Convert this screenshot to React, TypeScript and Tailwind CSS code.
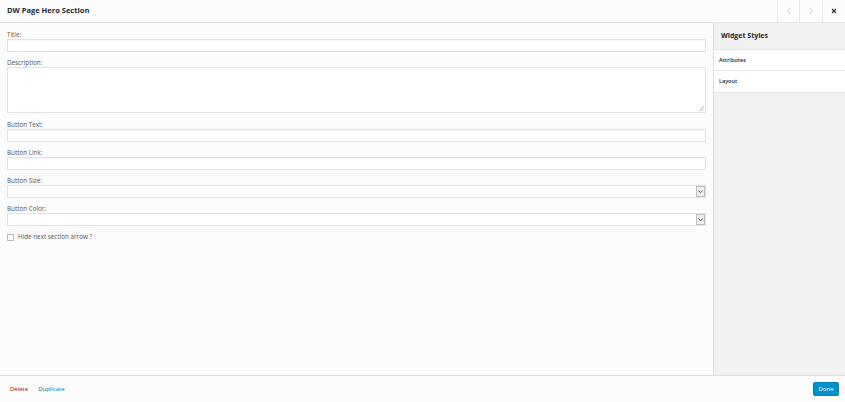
import React from "react";

const font = { fontFamily: '"Open Sans", "Noto Sans", sans-serif' };

function Label({ children }: { children: React.ReactNode }) {
  return <div className="h-[8px] text-[6.3px] leading-[8px] text-[#555]">{children}</div>;
}

function TextField({ label }: { label: string }) {
  return (
    <div className="mb-[7px]">
      <Label>{label}</Label>
      <div className="h-[13px] border border-[#e2e2e2] bg-white shadow-[inset_0_1px_1px_rgba(0,0,0,0.04)]" />
    </div>
  );
}

function SelectField({ label }: { label: string }) {
  return (
    <div className="mb-[7px]">
      <Label>{label}</Label>
      <div className="flex h-[13px] border border-[#e2e2e2] bg-white">
        <div className="flex-1" />
        <div className="flex w-[9px] items-center justify-center border border-[#bdbdbd] bg-[#eeeeee]">
          <svg width="5" height="4" viewBox="0 0 5 4">
            <path d="M0.5 0.5 L2.5 2.8 L4.5 0.5" fill="none" stroke="#666" strokeWidth="1" />
          </svg>
        </div>
      </div>
    </div>
  );
}

export default function App() {
  return (
    <div className="flex h-[402px] w-[845px] flex-col bg-[#fcfcfc]" style={font}>
      {/* Header */}
      <div className="flex h-[23px] shrink-0 items-center border-b border-[#e3e3e3] bg-[#fcfcfc]">
        <div className="flex-1 pl-[7px] text-[7.5px] font-bold text-[#23282d]">DW Page Hero Section</div>
        <div className="flex h-full">
          <div className="flex w-[22px] items-center justify-center border-l border-[#e8e8e8]">
            <svg width="6" height="8" viewBox="0 0 6 8">
              <path d="M4 1 L1.5 4 L4 7" fill="none" stroke="#cfcfcf" strokeWidth="1" />
            </svg>
          </div>
          <div className="flex w-[23px] items-center justify-center border-l border-[#e8e8e8]">
            <svg width="6" height="8" viewBox="0 0 6 8">
              <path d="M2 1 L4.5 4 L2 7" fill="none" stroke="#cfcfcf" strokeWidth="1" />
            </svg>
          </div>
          <div className="flex w-[23px] items-center justify-center border-l border-[#e8e8e8]">
            <svg width="6" height="6" viewBox="0 0 6 6">
              <path d="M1 1 L5 5 M5 1 L1 5" fill="none" stroke="#333" strokeWidth="1.2" />
            </svg>
          </div>
        </div>
      </div>

      {/* Body */}
      <div className="flex min-h-0 flex-1">
        <div className="flex-1 px-[7px] pt-[8px]">
          <TextField label="Title:" />
          <div className="mb-[8px]">
            <Label>Description:</Label>
            <div className="relative h-[46px] border border-[#e2e2e2] bg-white">
              <svg className="absolute bottom-[1px] right-[1px]" width="5" height="5" viewBox="0 0 5 5">
                <path d="M5 0 L0 5 M5 2.5 L2.5 5" stroke="#b0b0b0" strokeWidth="0.8" />
              </svg>
            </div>
          </div>
          <TextField label="Button Text:" />
          <TextField label="Button Link:" />
          <SelectField label="Button Size:" />
          <SelectField label="Button Color:" />
          <div className="flex h-[8px] items-center gap-[4px]">
            <div className="h-[7px] w-[7px] border border-[#b4b9be] bg-white" />
            <span className="text-[6.3px] text-[#555]">Hide next section arrow ?</span>
          </div>
        </div>

        {/* Sidebar */}
        <div className="w-[132px] shrink-0 border-l border-[#dddddd] bg-[#f1f1f1]">
          <div className="flex h-[26px] items-center pl-[7px] text-[7px] font-bold text-[#23282d]">Widget Styles</div>
          <div className="flex h-[22px] items-center border-y border-[#e5e5e5] bg-white pl-[5px] text-[5.5px] font-semibold text-[#23282d]">
            Attributes
          </div>
          <div className="flex h-[22px] items-center border-b border-[#e5e5e5] bg-white pl-[5px] text-[5.5px] font-semibold text-[#23282d]">
            Layout
          </div>
        </div>
      </div>

      {/* Footer */}
      <div className="flex h-[27px] shrink-0 items-center border-t border-[#dddddd] bg-[#fcfcfc] pl-[10px] pr-[6px]">
        <span className="text-[6px] text-[#a00]">Delete</span>
        <span className="ml-[10px] text-[6px] text-[#0073aa]">Duplicate</span>
        <div className="flex-1" />
        <div className="flex h-[14px] w-[26px] items-center justify-center rounded-[2px] border border-[#0080b8] bg-[#0091cd] text-[6px] text-white">
          Done
        </div>
      </div>
    </div>
  );
}
